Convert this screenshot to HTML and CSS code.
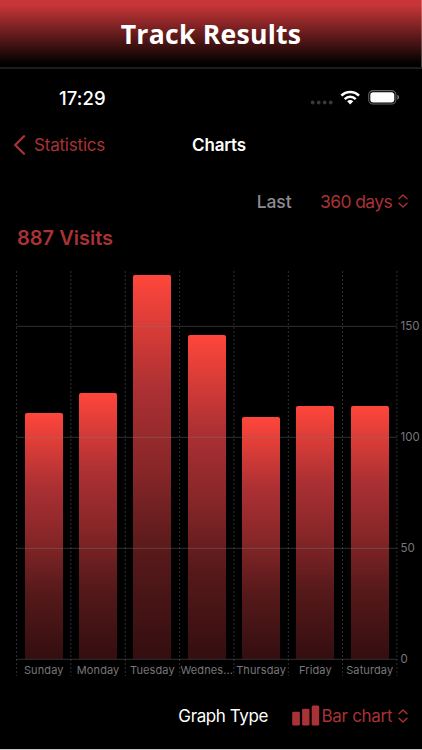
FILE: index.html
```
<!DOCTYPE html>
<html lang="en">
<head>
<meta charset="utf-8">
<title>Track Results</title>
<link rel="stylesheet" href="styles.css">
</head>
<body>
<main class="screen">
  <header class="banner"><h1>Track Results</h1></header>
  <div class="status">
    <time class="clock">17:29</time>
    <svg class="status-icons" width="90" height="18" viewBox="0 0 90 18">
      <g fill="#38383a"><circle cx="2.7" cy="13.5" r="1.9"/><circle cx="8.7" cy="13.5" r="1.9"/><circle cx="14.7" cy="13.5" r="1.9"/><circle cx="20.7" cy="13.5" r="1.9"/></g>
      <g fill="none" stroke="#fff" stroke-width="2.5"><path d="M31.4 6.7a12.1 12.1 0 0 1 17.6 0"/><path d="M34.7 10.1a7.7 7.7 0 0 1 11 0"/></g>
      <path fill="#fff" d="M37.1 12.3a4.6 4.6 0 0 1 6.2 0L40.2 15.5z"/>
      <rect x="58.7" y="1.6" width="27.2" height="13.4" rx="4.3" fill="none" stroke="#646466" stroke-width="1.1"/>
      <rect x="60.3" y="3.2" width="24" height="10.2" rx="2.9" fill="#fff"/>
      <path fill="#747476" d="M87.3 5.8c2.4.8 2.4 4.2 0 5z"/>
    </svg>
  </div>
  <nav class="nav">
    <a class="back"><svg width="13" height="20" viewBox="0 0 13 20"><path d="M11 1.3 2.2 10 11 18.7" fill="none" stroke="currentColor" stroke-width="2.3" stroke-linecap="round" stroke-linejoin="round"/></svg><span>Statistics</span></a>
    <h2>Charts</h2>
  </nav>
  <div class="range">
    <span class="range-label">Last</span>
    <span class="range-value">360 days</span>
    <svg class="chevrons" width="10" height="14" viewBox="0 0 10 14"><path d="M1 4.8 5 1l4 3.8M1 9.2 5 13l4-3.8"/></svg>
  </div>
  <h3 class="total">887 Visits</h3>
  <section class="chart">
    <div class="plot">
      <div class="day"><div class="track"><div class="bar" style="height:246.4px"></div></div><span>Sunday</span></div>
      <div class="day"><div class="track"><div class="bar" style="height:266.4px"></div></div><span>Monday</span></div>
      <div class="day"><div class="track"><div class="bar" style="height:384px"></div></div><span>Tuesday</span></div>
      <div class="day"><div class="track"><div class="bar" style="height:324.1px"></div></div><span>Wednes...</span></div>
      <div class="day"><div class="track"><div class="bar" style="height:242px"></div></div><span>Thursday</span></div>
      <div class="day"><div class="track"><div class="bar" style="height:253.1px"></div></div><span>Friday</span></div>
      <div class="day"><div class="track"><div class="bar" style="height:253.1px"></div></div><span>Saturday</span></div>
      <svg class="grid" width="382" height="408" viewBox="0 0 382 408">
        <path class="rules" d="M.5 56.3H381M.5 167.3H381M.5 278.3H381M.5 389.3H381"/>
        <path class="dashes" d="M.6 1V406M54.9 1V406M109.3 1V406M163.6 1V406M217.9 1V406M272.3 1V406M326.6 1V406M380.9 1V406"/>
      </svg>
    </div>
    <div class="scale"><span>150</span><span>100</span><span>50</span><span>0</span></div>
  </section>
  <footer class="type">
    <span class="type-label">Graph Type</span>
    <svg class="type-icon" width="28" height="21" viewBox="0 0 28 21" fill="currentColor"><rect x=".2" y="6.7" width="7.7" height="13.9" rx="1.4"/><rect x="10.1" y="3.7" width="7.4" height="16.9" rx="1.4"/><rect x="19.7" y=".6" width="7.5" height="20" rx="1.4"/></svg>
    <span class="type-value">Bar chart</span>
    <svg class="chevrons" width="10" height="14" viewBox="0 0 10 14"><path d="M1 4.8 5 1l4 3.8M1 9.2 5 13l4-3.8"/></svg>
  </footer>
</main>
</body>
</html>
```
FILE: styles.css
```
* { box-sizing: border-box; margin: 0; }
body { background: #000; font-family: Inter, sans-serif; color: #fff; }
h1, h2, h3, span, time { white-space: nowrap; }
svg { display: block; flex: none; }
.screen { width: 422px; height: 750px; overflow: hidden; border-bottom: 1px solid #c9c9c9; }
.banner { height: 69px; background: linear-gradient(#cb3638, #c63537 8%, #000 96%); border-bottom: 2px solid #1d1b1d; box-shadow: inset -1px 0 rgba(255, 255, 255, .25); text-align: center; }
.banner h1 { font: 700 26.6px/68px "Open Sans", sans-serif; letter-spacing: .24px; }
.status { height: 53px; display: flex; align-items: center; padding: 6px 22px 0 59px; justify-content: space-between; }
.clock { font-size: 18.5px; font-weight: 500; letter-spacing: .1px; margin-top: -2px; }
.status-icons { margin-top: -1px; }
.nav { height: 46px; display: grid; grid-template-columns: 1fr auto 1fr; align-items: center; padding: 0 0 0 16px; }
.back { display: flex; align-items: center; gap: 8px; color: #a93235; font-size: 17px; letter-spacing: -.2px; margin-left: -3px; }
.nav h2 { font-size: 17px; font-weight: 600; letter-spacing: -.2px; }
.range { height: 66px; display: flex; align-items: center; justify-content: flex-end; padding-right: 14.5px; font-size: 17.5px; }
.range-label { color: #8b8b91; font-weight: 500; letter-spacing: -.1px; margin-right: 28.5px; }
.range-value { color: #a93235; font-size: 17.5px; letter-spacing: -.6px; margin-right: 5.3px; }
.range .chevrons, .type .chevrons { color: #a93235; }
.chevrons path { fill: none; stroke: currentColor; stroke-width: 1.4; stroke-linecap: round; stroke-linejoin: round; }
.total { height: 36px; line-height: 9px; padding-left: 17px; color: #a93235; font-size: 20px; font-weight: 600; }
.chart { display: flex; padding-left: 16px; height: 414px; }
.plot { position: relative; width: 381.5px; height: 408px; display: grid; grid-template-columns: repeat(7, 54.33px); padding-left: .6px; }
.day { text-align: center; color: #77777b; font-size: 11px; line-height: 23px; min-width: 0; letter-spacing: .1px; }
.track { height: 389px; display: flex; align-items: flex-end; justify-content: center; }
.bar { width: 38px; border-radius: 2px 2px 0 0; background: linear-gradient(#ff463b, #ab3033 30%, #872628 51%, #56191a 73%, #340e10); }
.grid { position: absolute; left: 0; top: 0; }
.rules { stroke: #77777f; stroke-opacity: .4; stroke-width: 1; }
.dashes { stroke: #77777f; stroke-opacity: .4; stroke-width: 1; stroke-dasharray: 2 2; }
.scale { padding: 1px 0 0 3px; color: #77777b; font-size: 11.5px; display: grid; grid-template-rows: repeat(4, 111px); line-height: 111px; }
.type { height: 64px; display: flex; align-items: center; justify-content: flex-end; padding-right: 14.5px; font-size: 17px; letter-spacing: -.4px; color: #a93235; }
.type-label { color: #fff; margin-right: 23.5px; }
.type-icon { margin-top: -1px; }
.type-value { letter-spacing: -.3px; margin: 0 5.3px 0 2px; }
```
